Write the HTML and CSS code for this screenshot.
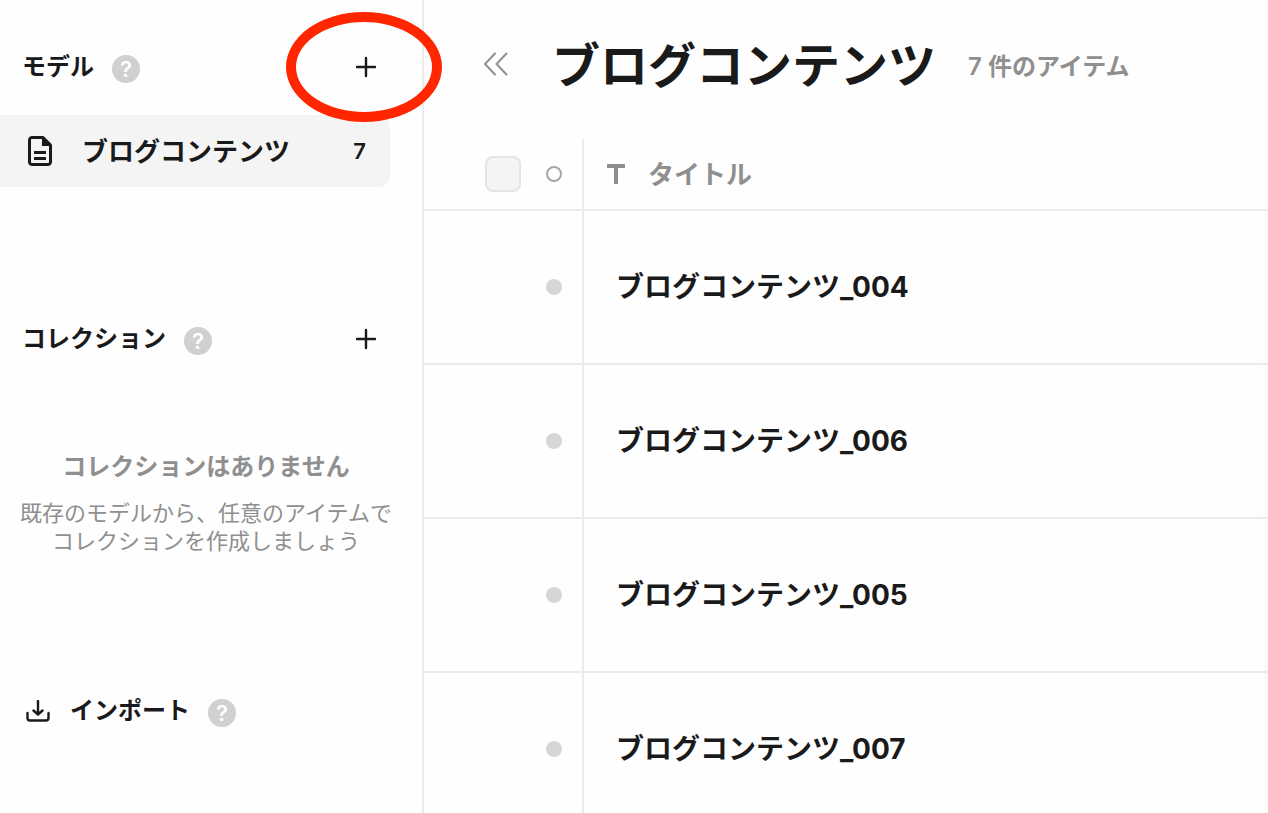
FILE: index.html
```html
<!DOCTYPE html>
<html lang="ja">
<head>
    <meta charset="UTF-8">
    <title>ブログコンテンツ</title>
    <link rel="stylesheet" href="styles.css">
</head>
<body>

<div class="app">
    <aside class="sidebar">
        <div class="section-header">
            <h2>モデル</h2>
            <button type="button" class="help">?</button>
            <button type="button" class="add-button" aria-label="モデルを追加">
                <svg width="22" height="22" viewBox="0 0 22 22"><path d="M11 2v18M2 11h18"/></svg>
            </button>
            <span class="highlight"></span>
        </div>

        <a href="#" class="model-item">
            <svg width="24" height="30" viewBox="0 0 24 30">
                <path class="line" d="M4 1.500H15L22.500 9V26a2.500 2.500 0 0 1-2.500 2.500H4A2.500 2.500 0 0 1 1.500 26V4A2.500 2.500 0 0 1 4 1.500Z"/>
                <path class="fill" d="M14 1v9h9Z"/>
                <path class="line" d="M6 16.500h12M6 22.500h12"/>
            </svg>
            <span class="model-name">ブログコンテンツ</span>
            <span class="model-count">7</span>
        </a>

        <div class="section-header collection-header">
            <h2>コレクション</h2>
            <button type="button" class="help">?</button>
            <button type="button" class="add-button" aria-label="コレクションを追加">
                <svg width="22" height="22" viewBox="0 0 22 22"><path d="M11 2v18M2 11h18"/></svg>
            </button>
        </div>

        <div class="empty">
            <h3>コレクションはありません</h3>
            <p>既存のモデルから、任意のアイテムで<br>コレクションを作成しましょう</p>
        </div>

        <div class="section-header import-header">
            <button type="button" class="import-button">
                <svg width="24" height="22" viewBox="0 0 24 22"><path d="M12 1v13M7.500 10.500L12 14.500l4.500-4M1.500 13v5q0 2.500 2.500 2.500h16q2.500 0 2.500-2.500v-5"/></svg>
                インポート
            </button>
            <button type="button" class="help">?</button>
        </div>
    </aside>

    <main class="content">
        <header class="content-header">
            <button type="button" class="collapse" aria-label="サイドバーを閉じる">
                <svg width="24" height="24" viewBox="0 0 24 24"><path d="M11 1.500L1 12l10 10.500M22.500 1.500L12.500 12l10 10.500"/></svg>
            </button>
            <h1>ブログコンテンツ</h1>
            <span class="item-count">7 件のアイテム</span>
        </header>

        <table class="items">
            <thead>
                <tr>
                    <th class="col-status">
                        <div class="status">
                            <input type="checkbox" class="check" aria-label="すべて選択">
                            <span class="ring"></span>
                        </div>
                    </th>
                    <th class="col-title">
                        <div class="field">
                            <svg class="type-icon" width="20" height="20" viewBox="0 0 20 20"><path d="M1 2h18M10 2v18"/></svg>
                            <span class="field-name">タイトル</span>
                        </div>
                    </th>
                </tr>
            </thead>
            <tbody>
                <tr>
                    <td class="col-status"><div class="status"><span class="dot"></span></div></td>
                    <td class="col-title">ブログコンテンツ_004</td>
                </tr>
                <tr>
                    <td class="col-status"><div class="status"><span class="dot"></span></div></td>
                    <td class="col-title">ブログコンテンツ_006</td>
                </tr>
                <tr>
                    <td class="col-status"><div class="status"><span class="dot"></span></div></td>
                    <td class="col-title">ブログコンテンツ_005</td>
                </tr>
                <tr>
                    <td class="col-status"><div class="status"><span class="dot"></span></div></td>
                    <td class="col-title">ブログコンテンツ_007</td>
                </tr>
            </tbody>
        </table>
    </main>
</div>

</body>
</html>
```
FILE: styles.css
```css
* {
    box-sizing: border-box;
}

body {
    margin: 0;
    font-family: Inter, "Noto Sans CJK JP", sans-serif;
    font-size: 24px;
    color: #1a1a1a;
    background-color: #fefefe;
}

h1, h2, h3, p {
    margin: 0;
}

button {
    padding: 0;
    border: none;
    background: none;
    color: inherit;
    font: inherit;
    cursor: pointer;
}

svg {
    display: block;
    fill: none;
    stroke: #1a1a1a;
    stroke-width: 2.4;
    stroke-linecap: round;
    stroke-linejoin: round;
}

.app {
    display: flex;
    height: 100vh;
    overflow: hidden;
}

/* サイドバー */
.sidebar {
    flex: 0 0 424px;
    padding-top: 49px;
    border-right: 2px solid #ebebeb;
}

.section-header {
    position: relative;
    display: flex;
    align-items: center;
    padding: 0 45px 0 22px;
    line-height: 36px;
}

.section-header h2 {
    font-size: 24px;
    font-weight: 700;
}

.help {
    width: 28px;
    height: 28px;
    margin-top: 4px;
    margin-left: 18px;
    border-radius: 50%;
    background-color: #d0d0d0;
    color: #fefefe;
    font-size: 22px;
    font-weight: 600;
    line-height: 28px;
}

.add-button {
    margin-left: auto;
}

.highlight {
    position: absolute;
    top: -37px;
    left: 286px;
    width: 156px;
    height: 110px;
    border: 10px solid #ff2600;
    border-radius: 50%;
    pointer-events: none;
    z-index: 1;
}

.model-item {
    display: flex;
    align-items: center;
    height: 72px;
    margin: 30px 32px 0 0;
    padding: 0 24px 0 28px;
    border-radius: 0 12px 12px 0;
    background-color: #f4f4f4;
    color: inherit;
    font-weight: 700;
    text-decoration: none;
}

.model-item .line {
    stroke-width: 3;
    stroke-linecap: butt;
}

.model-item .fill {
    fill: #1a1a1a;
    stroke: none;
}

.model-name {
    flex: 1;
    margin-left: 30px;
    padding-bottom: 4px;
    font-size: 26px;
}

.model-count {
    font-size: 22px;
    font-weight: 600;
}

.collection-header {
    margin-top: 134px;
}

.empty {
    margin-top: 92px;
    padding-right: 10px;
    color: #8f8f8f;
    text-align: center;
}

.empty h3 {
    font-size: 24px;
    font-weight: 700;
    line-height: 36px;
}

.empty p {
    margin-top: 14px;
    font-size: 22px;
    line-height: 28px;
}

.import-header {
    margin-top: 138px;
    padding-left: 26px;
}

.import-button {
    display: flex;
    align-items: center;
    gap: 20px;
    font-weight: 700;
}

/* コンテンツ */
.content {
    flex: 1;
    min-width: 0;
}

.content-header {
    display: flex;
    align-items: center;
    height: 139px;
    padding: 0 32px 11px 60px;
}

.collapse svg {
    stroke: #8f8f8f;
    stroke-width: 2;
}

h1 {
    margin-left: 44px;
    padding-bottom: 4px;
    font-size: 48px;
    font-weight: 700;
    white-space: nowrap;
}

.item-count {
    margin-left: 32px;
    color: #8f8f8f;
    font-weight: 600;
    white-space: nowrap;
}

.items {
    width: 100%;
    border-collapse: separate;
    border-spacing: 0;
    table-layout: fixed;
}

.items th,
.items td {
    height: 154px;
    padding: 0;
    border-bottom: 2px solid #ebebeb;
    text-align: left;
    font-size: 28px;
    font-weight: 700;
}

.items th {
    height: 72px;
    color: #8f8f8f;
    font-size: 26px;
}

.items .col-status {
    width: 160px;
    border-right: 2px solid #ebebeb;
}

.items td.col-title {
    padding: 0 0 4px 32px;
    background: linear-gradient(to left, #fbfbfb, #fefefe 8px);
}

.status {
    display: flex;
    align-items: center;
    justify-content: flex-end;
    gap: 25px;
    padding-right: 20px;
}

.check {
    appearance: none;
    width: 36px;
    height: 36px;
    margin: 0;
    border: 2px solid #e4e4e4;
    border-radius: 8px;
    background-color: #f4f4f4;
}

.ring,
.dot {
    width: 16px;
    height: 16px;
    border-radius: 50%;
}

.ring {
    border: 2px solid #a6a6a6;
}

.dot {
    background-color: #d6d6d6;
}

.field {
    display: flex;
    align-items: center;
    gap: 22px;
    padding-left: 22px;
}

.field-name {
    padding-bottom: 4px;
}

.type-icon {
    stroke: #8f8f8f;
    stroke-width: 4;
    stroke-linecap: butt;
}
```
